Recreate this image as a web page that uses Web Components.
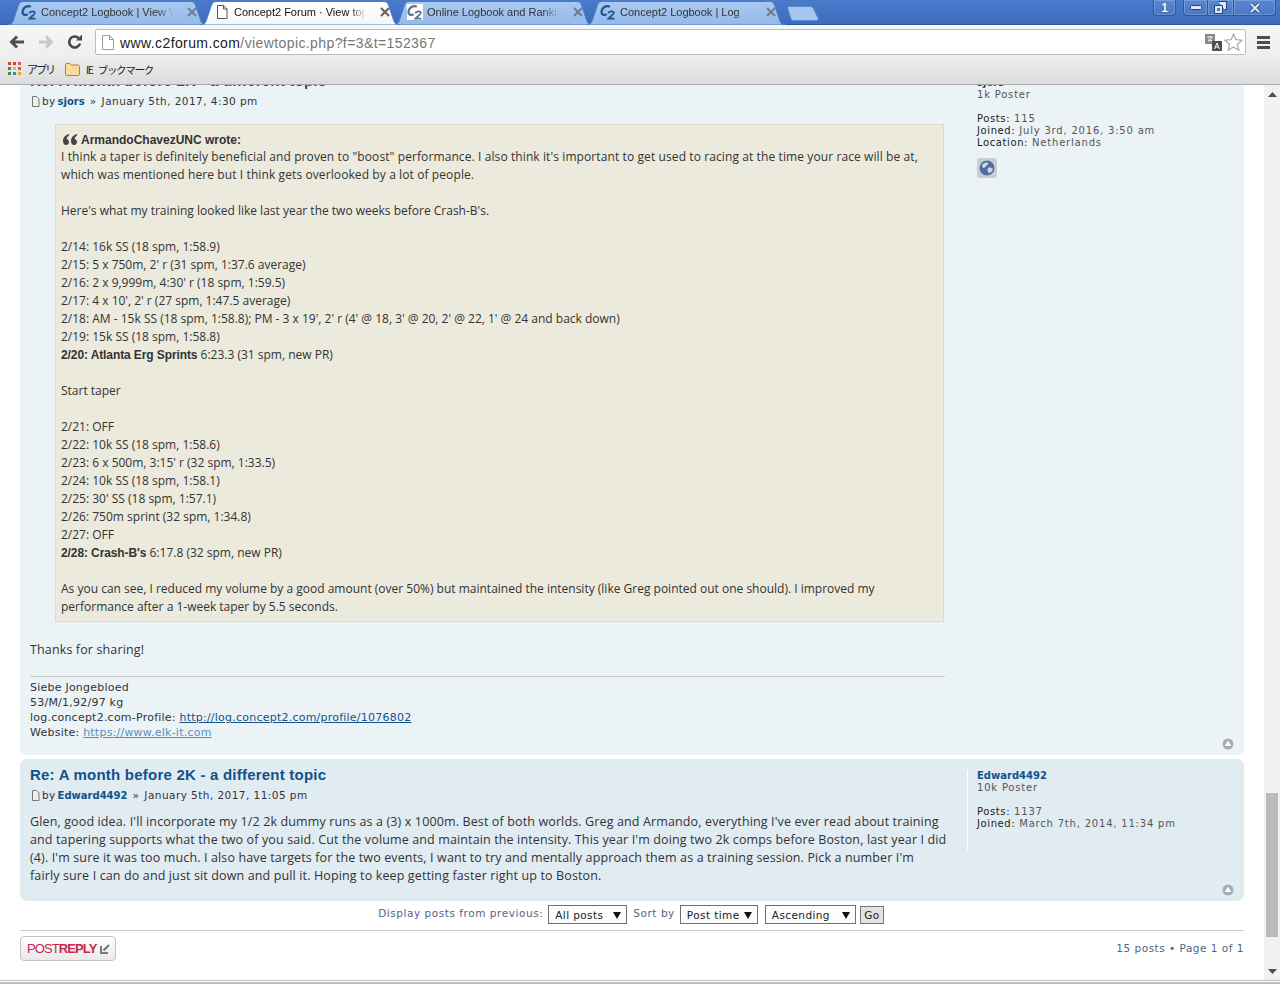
<!DOCTYPE html>
<html>
<head>
<meta charset="utf-8">
<title>Concept2 Forum</title>
<style>
  html, body { margin: 0; padding: 0; background: #fff; }
  body { width: 1280px; height: 984px; overflow: hidden; display: flex; flex-direction: column; font-family: "Liberation Sans", sans-serif; }
  post-quote b { font-family: "Liberation Sans", sans-serif; font-weight: bold; letter-spacing: -.1px; }
  post-quote .wide { letter-spacing: .1px; }
  .after { padding-top: 1px; margin-bottom: -1px; }
</style>
</head>
<body>

<tab-strip>
  <browser-tab label="Concept2 Logbook | View Workouts" icon="c2"></browser-tab>
  <browser-tab label="Concept2 Forum · View topic" icon="page" active></browser-tab>
  <browser-tab label="Online Logbook and Rankings" icon="c2box"></browser-tab>
  <browser-tab label="Concept2 Logbook | Log" icon="c2"></browser-tab>
</tab-strip>
<nav-toolbar></nav-toolbar>
<bookmark-bar></bookmark-bar>

<page-view>
  <forum-post variant="one" class="clipped" title-text="Re: A month before 2K - a different topic" author="sjors" date="January 5th, 2017, 4:30 pm">
    <post-quote author="ArmandoChavezUNC"><span class="wide">I think a taper is definitely beneficial and proven to "boost" performance. I also think it's important to get used to racing at the time your race will be at,</span><br><span class="wide">which was mentioned here but I think gets overlooked by a lot of people.</span><br><br>Here's what my training looked like last year the two weeks before Crash-B's.<br><br>2/14: 16k SS (18 spm, 1:58.9)<br>2/15: 5 x 750m, 2' r (31 spm, 1:37.6 average)<br>2/16: 2 x 9,999m, 4:30' r (18 spm, 1:59.5)<br>2/17: 4 x 10', 2' r (27 spm, 1:47.5 average)<br>2/18: AM - 15k SS (18 spm, 1:58.8); PM - 3 x 19', 2' r (4' @ 18, 3' @ 20, 2' @ 22, 1' @ 24 and back down)<br>2/19: 15k SS (18 spm, 1:58.8)<br><b>2/20: Atlanta Erg Sprints</b> 6:23.3 (31 spm, new PR)<br><br>Start taper<br><br>2/21: OFF<br>2/22: 10k SS (18 spm, 1:58.6)<br>2/23: 6 x 500m, 3:15' r (32 spm, 1:33.5)<br>2/24: 10k SS (18 spm, 1:58.1)<br>2/25: 30' SS (18 spm, 1:57.1)<br>2/26: 750m sprint (32 spm, 1:34.8)<br>2/27: OFF<br><b>2/28: Crash-B's</b> 6:17.8 (32 spm, new PR)<br><br>As you can see, I reduced my volume by a good amount (over 50%) but maintained the intensity (like Greg pointed out one should). I improved my<br>performance after a 1-week taper by 5.5 seconds.</post-quote>
    <div slot="after" class="after">Thanks for sharing!</div>
    <post-signature slot="signature"></post-signature>
    <poster-profile slot="profile" name="sjors" rank="1k Poster" posts="115" joined="July 3rd, 2016, 3:50 am" location="Netherlands" website></poster-profile>
  </forum-post>

  <forum-post variant="two" title-text="Re: A month before 2K - a different topic" author="Edward4492" date="January 5th, 2017, 11:05 pm">
    Glen, good idea. I'll incorporate my 1/2 2k dummy runs as a (3) x 1000m. Best of both worlds. Greg and Armando, everything I've ever read about training<br>and tapering supports what the two of you said. Cut the volume and maintain the intensity. This year I'm doing two 2k comps before Boston, last year I did<br>(4). I'm sure it was too much. I also have targets for the two events, I want to try and mentally approach them as a training session. Pick a number I'm<br>fairly sure I can do and just sit down and pull it. Hoping to keep getting faster right up to Boston.
    <poster-profile slot="profile" name="Edward4492" rank="10k Poster" posts="1137" joined="March 7th, 2014, 11:34 pm"></poster-profile>
  </forum-post>

  <sort-options></sort-options>
  <topic-actions></topic-actions>
</page-view>

<status-edge></status-edge>

<script>
const BODY_FONT = '"Open Sans", Arial, sans-serif';

const c2Mark = `<path d="M9.800 2.600C6.500 1 2.300 3.300 1.600 7.300 1.100 10.400 3.500 11.700 6.800 10.200" fill="none" stroke="currentColor" stroke-width="2.300"/><path d="M8.300 9.300C9 6.800 14 6.600 13.800 9 13.600 10.700 10.500 12.200 8.500 14.600H14.500" fill="none" stroke="currentColor" stroke-width="1.800"/>`;

const icons = {
  page: `<svg width="14" height="16" viewBox="0 0 14 16"><path d="M2.5 1.5h6l3.5 3.5v9.500h-9.500z" fill="#fff" stroke="#555"/><path d="M8.500 1.500v3.500h3.500" fill="none" stroke="#555"/></svg>`,
  c2: `<svg width="16" height="16" viewBox="0 0 16 16" style="color:#23558c">${c2Mark}</svg>`,
  c2box: `<svg width="16" height="16" viewBox="0 0 16 16" style="color:#5a7590;background:#fff">${c2Mark}</svg>`
};

const tabTemplate = document.createElement('template');
tabTemplate.innerHTML = `
  <style>
    :host { display: block; position: relative; width: 200px; height: 24px; margin-left: -7px; font: 11px "Liberation Sans", sans-serif; color: #333; }
    :host([active]) { z-index: 2; color: #111; }
    svg.shape { position: absolute; left: 0; top: 0; }
    .inner { position: relative; display: flex; align-items: center; height: 22px; padding: 0 10px 0 14px; gap: 4px; }
    .icon { width: 16px; height: 16px; flex: none; display: flex; align-items: center; justify-content: center; }
    .label { flex: 1; white-space: nowrap; overflow: hidden; -webkit-mask-image: linear-gradient(to right, #000 88%, transparent 100%); }
    .x { flex: none; width: 10px; height: 10px; margin-left: 10px; }
  </style>
  <svg class="shape" width="200" height="24" viewBox="0 0 200 24">
    <defs><linearGradient id="g" x1="0" y1="0" x2="0" y2="1"><stop id="s1" offset="0"/><stop id="s2" offset="1"/></linearGradient></defs>
    <path id="p" d="M0 24C4 24 5.500 22 6.500 19L11.500 4C12.500 1.200 14 .500 17 .500H183C186 .500 187.500 1.200 188.500 4L193.500 19C194.500 22 196 24 200 24Z" fill="url(#g)" stroke="#4f7cc0"/>
  </svg>
  <div class="inner">
    <span class="icon"></span>
    <span class="label"></span>
    <svg class="x" viewBox="0 0 10 10"><path d="M1 1l8 8M9 1l-8 8" stroke="#6f7f92" stroke-width="2.200"/></svg>
  </div>
`;

class BrowserTab extends HTMLElement {
  constructor() {
    super();
    this._shadowRoot = this.attachShadow({ mode: 'open' });
    this._shadowRoot.appendChild(tabTemplate.content.cloneNode(true));
  }

  connectedCallback() {
    const active = this.hasAttribute('active');
    this._shadowRoot.querySelector('.label').textContent = this.getAttribute('label');
    this._shadowRoot.querySelector('.icon').innerHTML = icons[this.getAttribute('icon')] || '';
    this._shadowRoot.getElementById('s1').setAttribute('stop-color', active ? '#ffffff' : '#a9c9f1');
    this._shadowRoot.getElementById('s2').setAttribute('stop-color', active ? '#f6f6f6' : '#94b9ea');
    if (active) this._shadowRoot.querySelector('.x path').setAttribute('stroke', '#666');
  }
}

const stripTemplate = document.createElement('template');
stripTemplate.innerHTML = `
  <style>
    :host { display: flex; flex: none; height: 25px; box-sizing: border-box; padding: 1px 0 0 14px; background: linear-gradient(#4a7acb, #3d6cbd); border-bottom: 1px solid #2d5a9f; }
    .tabs { display: flex; }
    .newtab { flex: none; margin: 5px 0 0 1px; }
    .spacer { flex: 1; }
    .win { display: flex; flex: none; height: 16px; margin-top: -1px; font: bold 12px "Liberation Sans", sans-serif; }
    .btn { display: flex; align-items: center; justify-content: center; box-sizing: border-box; height: 16px; border: 1px solid #2d5797; border-top: 0; background: linear-gradient(#5a87d2, #4a78c6); box-shadow: inset 0 0 0 1px rgba(255,255,255,.18); }
    .one { width: 23px; margin-right: 7px; border-radius: 0 0 4px 4px; color: #fff; text-shadow: 0 0 1px #123; }
    .min { width: 25px; border-radius: 0 0 0 4px; }
    .max { width: 26px; border-left: 0; }
    .cls { width: 42px; border-left: 0; border-radius: 0 0 4px 0; margin-right: 4px; }
  </style>
  <div class="tabs"><slot></slot></div>
  <svg class="newtab" width="32" height="15" viewBox="0 0 32 15"><path d="M.500 1.500C.500 1 1 .500 2 .500H24C25 .500 25.500 1 26 2L31 12C31.500 13.500 31 14.500 29 14.500H6C5 14.500 4.500 14 4 13Z" fill="#a5c6f0" stroke="#5f8bc9"/></svg>
  <div class="spacer"></div>
  <div class="win">
    <div class="btn one">1</div>
    <div class="btn min"><svg width="12" height="6" viewBox="0 0 12 6"><rect x=".500" y=".500" width="11" height="4" rx="1" fill="#dce8f8" stroke="#26436f"/></svg></div>
    <div class="btn max"><svg width="13" height="13" viewBox="0 0 13 13"><path d="M4.500.500h8v8h-2M.500 4.500h8v8h-8z" fill="#dce8f8" stroke="#26436f"/><rect x="3" y="7" width="3" height="3" fill="#4a78c6"/></svg></div>
    <div class="btn cls"><svg width="12" height="10" viewBox="0 0 12 10"><path d="M2 1l8 8M10 1l-8 8" stroke="#26436f" stroke-width="3.400"/><path d="M2 1l8 8M10 1l-8 8" stroke="#e6effb" stroke-width="1.800"/></svg></div>
  </div>
`;

class TabStrip extends HTMLElement {
  constructor() {
    super();
    this.attachShadow({ mode: 'open' }).appendChild(stripTemplate.content.cloneNode(true));
  }
}

const toolbarTemplate = document.createElement('template');
toolbarTemplate.innerHTML = `
  <style>
    :host { display: flex; flex: none; align-items: center; height: 31px; box-sizing: border-box; padding: 4px 9px 1px 9px; background: linear-gradient(#f7f7f7, #eeeeee); }
    .nav { display: flex; flex: none; align-items: center; gap: 13px; width: 86px; }
    .omni { flex: 1; display: flex; align-items: center; height: 26px; box-sizing: border-box; padding: 0 2px 0 6px; background: #fff; border: 1px solid #bcbcbc; border-radius: 2px; }
    .url { flex: 1; margin-left: 6px; padding-top: 1px; font: 14px "Liberation Sans", sans-serif; letter-spacing: .4px; color: #777; white-space: nowrap; }
    .url b { font-weight: normal; color: #222; }
    .tr { flex: none; margin-right: 2px; }
    .menu { flex: none; margin-left: 11px; }
  </style>
  <div class="nav">
    <svg width="16" height="14" viewBox="0 0 16 14"><path d="M8 1.500L2.500 7 8 12.500M3 7h12" fill="none" stroke="#505050" stroke-width="3"/></svg>
    <svg width="16" height="14" viewBox="0 0 16 14"><path d="M8 1.500L13.500 7 8 12.500M13 7H1" fill="none" stroke="#c8c8c8" stroke-width="3"/></svg>
    <svg width="16" height="16" viewBox="0 0 16 16"><path d="M13 9.500A5.500 5.500 0 1 1 11.500 4" fill="none" stroke="#484848" stroke-width="2.600"/><path d="M9 6.500h6v-6z" fill="#484848"/></svg>
  </div>
  <div class="omni">
    <svg width="12" height="15" viewBox="0 0 12 15"><path d="M.500.500h7l4 4v10h-11z" fill="#fff" stroke="#999"/><path d="M7.500.500v4h4" fill="none" stroke="#999"/></svg>
    <div class="url"><b>www.c2forum.com</b>/viewtopic.php?f=3&amp;t=152367</div>
    <svg class="tr" width="17" height="17" viewBox="0 0 17 17"><rect x="0" y="0" width="10" height="10" fill="#8b8b8b"/><path d="M2.500 3h5M5 2v1M7 3c-.5 2-2 3.500-4 4M3.500 4.500c.5 1 1.500 2 3.500 2.500" stroke="#fff" fill="none"/><rect x="7" y="7" width="10" height="10" rx="1" fill="#4d4d4d"/><path d="M9.500 15l2.500-6 2.500 6M10.500 13h3" stroke="#fff" fill="none"/></svg>
    <svg width="19" height="18" viewBox="0 0 19 18"><path d="M9.500 1l2.400 5.600 6.100.6-4.600 4 1.400 6-5.300-3.200-5.300 3.200 1.400-6-4.600-4 6.100-.6z" fill="#fff" stroke="#a8a8a8" stroke-width="1.200"/></svg>
  </div>
  <svg class="menu" width="14" height="13" viewBox="0 0 14 13"><path d="M0 0h13v3H0zM0 5h13v3H0zM0 10h13v3H0z" fill="#4c4c4c"/></svg>
`;

class NavToolbar extends HTMLElement {
  constructor() {
    super();
    this.attachShadow({ mode: 'open' }).appendChild(toolbarTemplate.content.cloneNode(true));
  }
}

const bookmarksTemplate = document.createElement('template');
bookmarksTemplate.innerHTML = `
  <style>
    :host { display: flex; flex: none; align-items: center; height: 29px; box-sizing: border-box; padding: 0 0 2px 8px; background: linear-gradient(#eeeeee, #dcdcdc); border-bottom: 1px solid #aaa; font: 11px "Noto Sans CJK JP", sans-serif; color: #222; white-space: nowrap; }
    .apps { display: grid; grid-template-columns: repeat(3, 3px); grid-auto-rows: 3px; gap: 2px; flex: none; margin-top: -1px; }
    .apps i { display: block; }
    .t1 { margin-left: 6px; letter-spacing: -2px; }
    .folder { flex: none; margin-left: 11px; }
    .t2 { margin-left: 6px; font-size: 10.500px; letter-spacing: -1.300px; word-spacing: 4px; }
  </style>
  <div class="apps">
    <i style="background:#d9412f"></i><i style="background:#d9412f"></i><i style="background:#e2574a"></i>
    <i style="background:#3f8c47"></i><i style="background:#f2b632"></i><i style="background:#e2574a"></i>
    <i style="background:#3f8c47"></i><i style="background:#4186d8"></i><i style="background:#f0a02c"></i>
  </div>
  <span class="t1">アプリ</span>
  <svg class="folder" width="15" height="13" viewBox="0 0 15 13"><path d="M.500 2C.500 1 1 .500 2 .500h3l1.500 1.500H13c1 0 1.500.500 1.500 1.500v7.500c0 1-.500 1.500-1.500 1.500H2c-1 0-1.500-.500-1.500-1.500z" fill="#f8dc9c" stroke="#a8843c"/></svg>
  <span class="t2">IE ブックマーク</span>
`;

class BookmarkBar extends HTMLElement {
  constructor() {
    super();
    this.attachShadow({ mode: 'open' }).appendChild(bookmarksTemplate.content.cloneNode(true));
  }
}

const pageTemplate = document.createElement('template');
pageTemplate.innerHTML = `
  <style>
    :host { display: flex; flex: none; height: 895px; overflow: hidden; background: #fff; }
    .view { flex: 1; min-width: 0; overflow: hidden; padding: 0 20px; }
    .scroll { flex: none; display: flex; flex-direction: column; width: 16px; background: #f1f1f1; }
    .top, .bottom { display: flex; justify-content: center; flex: none; }
    .top { height: 708px; padding-top: 7px; box-sizing: border-box; }
    .thumb { flex: none; height: 144px; margin: 0 2px; background: #bcbcbc; }
    .bottom { flex: 1; align-items: flex-end; padding-bottom: 6px; }
  </style>
  <div class="view"><slot></slot></div>
  <div class="scroll">
    <div class="top"><svg width="9" height="5" viewBox="0 0 9 5"><path d="M4.500 0l4.500 5H0z" fill="#505050"/></svg></div>
    <div class="thumb"></div>
    <div class="bottom"><svg width="9" height="5" viewBox="0 0 9 5"><path d="M0 0h9L4.500 5z" fill="#505050"/></svg></div>
  </div>
`;

class PageView extends HTMLElement {
  constructor() {
    super();
    this.attachShadow({ mode: 'open' }).appendChild(pageTemplate.content.cloneNode(true));
  }
}

const postTemplate = document.createElement('template');
postTemplate.innerHTML = `
  <style>
    :host { display: block; border-radius: 7px; margin-bottom: 4px; background: #ecf3f7; }
    :host([variant="two"]) { background: #e1ebf2; }
    :host(.clipped) { margin-top: -20px; }
    .wrap { display: flex; padding: 5px 0 0 10px; }
    .main { flex: none; width: 915px; }
    h3 { margin: 0; height: 22px; font: bold 15px/22px "Liberation Sans", sans-serif; color: #105289; letter-spacing: .22px; white-space: nowrap; }
    .meta { display: flex; align-items: center; height: 14px; margin-top: 2px; font: 10.500px/14px "DejaVu Sans", sans-serif; letter-spacing: .45px; color: #333; white-space: nowrap; }
    .meta svg { flex: none; margin-right: 1px; }
    .meta b { margin-left: -2px; padding-top: 2px; color: #105289; font-size: 10px; letter-spacing: 0; }
    .meta .sep { margin: 0 5px; }
    .content { display: flow-root; margin-top: 10px; font: 12.500px/18px ${BODY_FONT}; letter-spacing: .13px; color: #333; white-space: nowrap; }
    :host([variant="two"]) .content { padding-top: 1px; }
    .profile { flex: none; width: 260px; margin-left: 22px; padding-left: 9px; border-left: 1px solid #fff; margin-top: 6px; height: 80px; }
    :host([variant="one"]) .profile { border-left-color: transparent; margin-top: 7px; }
    .foot { display: flex; justify-content: flex-end; padding: 0 10px 5px 0; }
    :host([variant="one"]) .foot { margin-top: -2px; }
    :host([variant="two"]) .foot { margin-top: -1px; }
    .foot svg { display: block; }
  </style>
  <div class="wrap">
    <div class="main">
      <h3 id="title"></h3>
      <div class="meta">
        <svg width="11" height="11" viewBox="0 0 11 11"><path d="M2.500 .500h4l2.500 2.500v7.500H2.500z" fill="#eee" stroke="#777"/></svg>by&nbsp;<b id="author"></b><span class="sep">»</span><span id="date"></span>
      </div>
      <div class="content"><slot></slot><slot name="after"></slot><slot name="signature"></slot></div>
    </div>
    <div class="profile"><slot name="profile"></slot></div>
  </div>
  <div class="foot">
    <svg width="12" height="12" viewBox="0 0 12 12"><circle cx="6" cy="6" r="5.500" fill="#a8acb0"/><path d="M6 2.700l3.300 5.300H2.700z" fill="#fff"/></svg>
  </div>
`;

class ForumPost extends HTMLElement {
  constructor() {
    super();
    this._shadowRoot = this.attachShadow({ mode: 'open' });
    this._shadowRoot.appendChild(postTemplate.content.cloneNode(true));
    this.$title = this._shadowRoot.getElementById('title');
    this.$author = this._shadowRoot.getElementById('author');
    this.$date = this._shadowRoot.getElementById('date');
  }

  connectedCallback() {
    this.$title.textContent = this.getAttribute('title-text');
    this.$author.textContent = this.getAttribute('author');
    this.$date.textContent = this.getAttribute('date');
  }
}

const quoteTemplate = document.createElement('template');
quoteTemplate.innerHTML = `
  <style>
    :host { display: block; width: 889px; box-sizing: border-box; margin: 6px 0 18px 25px; padding: 6px 5px 5px 5px; background: #ebeadd; border: 1px solid #dbdbce; font-size: 12px; letter-spacing: 0; }
    .cite { display: flex; align-items: center; height: 17px; font: bold 12px "Liberation Sans", sans-serif; color: #333; }
    .q { flex: none; margin: 0 4px 0 2px; }
  </style>
  <div class="cite"><svg class="q" width="14" height="11" viewBox="0 0 14 11"><path d="M6 0C2.500 1 0 3.500 0 7c0 2 1 4 3 4s3-1.500 3-3-1-3-2.500-3C4 3 5 2 6 1.500zM14 0c-3.500 1-6 3.500-6 7 0 2 1 4 3 4s3-1.500 3-3-1-3-2.500-3c.5-2 1.500-3 2.500-3.500z" fill="#444"/></svg><span id="who"></span></div>
  <slot></slot>
`;

class PostQuote extends HTMLElement {
  constructor() {
    super();
    this.attachShadow({ mode: 'open' }).appendChild(quoteTemplate.content.cloneNode(true));
  }

  connectedCallback() {
    this.shadowRoot.getElementById('who').textContent = `${this.getAttribute('author')} wrote:`;
  }
}

const signatureTemplate = document.createElement('template');
signatureTemplate.innerHTML = `
  <style>
    :host { display: block; margin-top: 18px; padding-top: 3px; border-top: 1px solid #cccccc; font: 11px/15px "DejaVu Sans", sans-serif; letter-spacing: .23px; color: #333; }
    a { color: #105289; }
    a.seen { color: #5b8ec0; }
  </style>
  Siebe Jongebloed<br>
  53/M/1,92/97 kg<br>
  log.concept2.com-Profile: <a href="#">http://log.concept2.com/profile/1076802</a><br>
  Website: <a class="seen" href="#">https://www.elk-it.com</a>
`;

class PostSignature extends HTMLElement {
  constructor() {
    super();
    this.attachShadow({ mode: 'open' }).appendChild(signatureTemplate.content.cloneNode(true));
  }
}

const profileTemplate = document.createElement('template');
profileTemplate.innerHTML = `
  <style>
    :host { display: block; font: 10px/12px "DejaVu Sans", sans-serif; letter-spacing: .8px; color: #555; white-space: nowrap; }
    .name { color: #105289; font-weight: bold; letter-spacing: 0; }
    .gap { height: 12px; }
    b { color: #222; font-weight: normal; letter-spacing: .6px; }
    .web { display: flex; align-items: center; justify-content: center; width: 20px; height: 20px; margin-top: 9px; background: #c9ced2; border-radius: 3px; }
    [hidden] { display: none; }
  </style>
  <div class="name"></div>
  <div class="rank"></div>
  <div class="gap"></div>
  <div><b>Posts:</b> <span class="posts"></span></div>
  <div><b>Joined:</b> <span class="joined"></span></div>
  <div class="loc"><b>Location:</b> <span class="where"></span></div>
  <div class="web">
    <svg width="16" height="16" viewBox="0 0 16 16"><circle cx="8" cy="8" r="7.500" fill="#4f6f9c"/><path d="M3 5c2-2 4-3 6-2 1 1-1 2-2 3s-1 2-3 2zM9 8c2-1 4 0 5 1-1 3-3 4-4 4s-2-3-1-5z" fill="#cfd8e2"/></svg>
  </div>
`;

class PosterProfile extends HTMLElement {
  constructor() {
    super();
    this._shadowRoot = this.attachShadow({ mode: 'open' });
    this._shadowRoot.appendChild(profileTemplate.content.cloneNode(true));
  }

  connectedCallback() {
    const root = this._shadowRoot;
    root.querySelector('.name').textContent = this.getAttribute('name');
    root.querySelector('.rank').textContent = this.getAttribute('rank');
    root.querySelector('.posts').textContent = this.getAttribute('posts');
    root.querySelector('.joined').textContent = this.getAttribute('joined');
    root.querySelector('.where').textContent = this.getAttribute('location') || '';
    root.querySelector('.loc').hidden = !this.hasAttribute('location');
    root.querySelector('.web').hidden = !this.hasAttribute('website');
  }
}

const optionsTemplate = document.createElement('template');
optionsTemplate.innerHTML = `
  <style>
    :host { display: flex; align-items: flex-start; justify-content: center; height: 25px; padding-right: 2px; font: 10.500px/16px "DejaVu Sans", sans-serif; letter-spacing: .55px; color: #536482; border-bottom: 1px solid #ccc; white-space: nowrap; }
    .sel { display: flex; align-items: center; justify-content: space-between; box-sizing: border-box; height: 19px; padding: 1px 5px 0 6px; border: 1px solid #707070; background: #fcfcfc; color: #222; letter-spacing: .4px; }
    .sel svg { flex: none; }
    .go { display: flex; align-items: center; justify-content: center; box-sizing: border-box; width: 24px; height: 18px; margin: 1px 0 0 4px; border: 1px solid #777; background: #e2e2e2; color: #222; letter-spacing: .4px; }
  </style>
  <span>Display posts from previous:</span>
  <div class="sel" style="width:79px;margin-left:5px">All posts<svg width="8" height="7" viewBox="0 0 8 7"><path d="M0 0h8L4 7z" fill="#111"/></svg></div>
  <span style="margin-left:6px">Sort by</span>
  <div class="sel" style="width:78px;margin-left:5px">Post time<svg width="8" height="7" viewBox="0 0 8 7"><path d="M0 0h8L4 7z" fill="#111"/></svg></div>
  <div class="sel" style="width:91px;margin-left:7px">Ascending<svg width="8" height="7" viewBox="0 0 8 7"><path d="M0 0h8L4 7z" fill="#111"/></svg></div>
  <div class="go">Go</div>
`;

class SortOptions extends HTMLElement {
  constructor() {
    super();
    this.attachShadow({ mode: 'open' }).appendChild(optionsTemplate.content.cloneNode(true));
  }
}

const actionsTemplate = document.createElement('template');
actionsTemplate.innerHTML = `
  <style>
    :host { display: flex; align-items: center; justify-content: space-between; margin-top: 5px; height: 25px; }
    .reply { display: flex; align-items: center; box-sizing: border-box; width: 96px; height: 25px; padding-left: 6px; border: 1px solid #c7c3bf; border-radius: 4px; background: linear-gradient(#ffffff, #e9e9e9); font: 13px "Liberation Sans", sans-serif; letter-spacing: -.9px; color: #c9274f; white-space: nowrap; }
    .reply b { font-weight: bold; }
    .reply svg { margin-left: 4px; flex: none; }
    .pages { padding-bottom: 2px; font: 10.500px "DejaVu Sans", sans-serif; letter-spacing: .5px; color: #536482; white-space: nowrap; }
  </style>
  <div class="reply">POST<b>REPLY</b><svg width="10" height="10" viewBox="0 0 10 10"><path d="M9 1L3.500 6.500M1 2v7h7" fill="none" stroke="#777" stroke-width="2"/></svg></div>
  <div class="pages">15 posts • Page 1 of 1</div>
`;

class TopicActions extends HTMLElement {
  constructor() {
    super();
    this.attachShadow({ mode: 'open' }).appendChild(actionsTemplate.content.cloneNode(true));
  }
}

const edgeTemplate = document.createElement('template');
edgeTemplate.innerHTML = `
  <style>
    :host { display: block; flex: none; height: 4px; box-sizing: border-box; background: #fff; border-top: 1px solid #c4c4c4; border-bottom: 2px solid #bdbdbd; }
  </style>
`;

class StatusEdge extends HTMLElement {
  constructor() {
    super();
    this.attachShadow({ mode: 'open' }).appendChild(edgeTemplate.content.cloneNode(true));
  }
}

window.customElements.define('browser-tab', BrowserTab);
window.customElements.define('tab-strip', TabStrip);
window.customElements.define('nav-toolbar', NavToolbar);
window.customElements.define('bookmark-bar', BookmarkBar);
window.customElements.define('page-view', PageView);
window.customElements.define('forum-post', ForumPost);
window.customElements.define('post-quote', PostQuote);
window.customElements.define('post-signature', PostSignature);
window.customElements.define('poster-profile', PosterProfile);
window.customElements.define('sort-options', SortOptions);
window.customElements.define('topic-actions', TopicActions);
window.customElements.define('status-edge', StatusEdge);
</script>
</body>
</html>
